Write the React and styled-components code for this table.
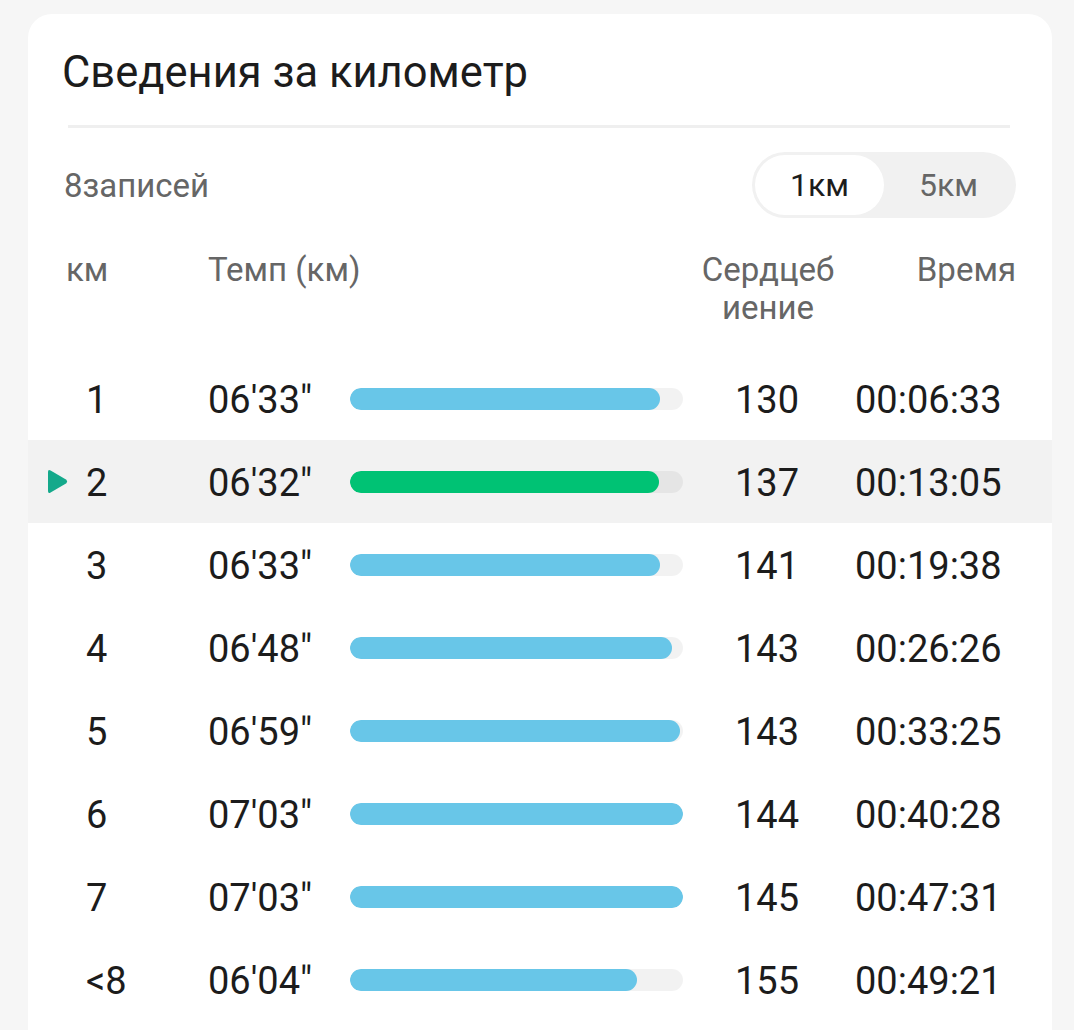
import React from "react";
import styled, { createGlobalStyle } from "styled-components";

const GlobalStyle = createGlobalStyle`
  body {
    margin: 0;
    background: #f6f6f6;
    font-family: Roboto, "Noto Sans", sans-serif;
  }
`;

const Page = styled.div`
  padding: 14px 22px 0 28px;
`;

const Card = styled.section`
  background: #ffffff;
  border-radius: 24px 24px 0 0;
  padding-bottom: 40px;
`;

const Title = styled.h1`
  margin: 0;
  padding: 34px 0 0 34px;
  font-size: 43.5px;
  line-height: 50px;
  font-weight: 400;
  color: #1c1c1c;
`;

const Divider = styled.div`
  height: 3px;
  background: #efefef;
  margin: 27px 42px 0 40px;
`;

const Summary = styled.div`
  display: flex;
  align-items: center;
  justify-content: space-between;
  margin-top: 24px;
  padding: 0 36px 0 36px;
`;

const Count = styled.span`
  font-size: 33px;
  color: #666666;
`;

const Toggle = styled.div`
  display: flex;
  background: #f1f1f1;
  border-radius: 34px;
  padding: 3px;
  width: 264px;
  height: 66px;
  box-sizing: border-box;
`;

const ToggleOption = styled.button`
  flex: 1;
  border: none;
  border-radius: 31px;
  font-family: inherit;
  font-size: 32px;
  background: ${(p) => (p.$active ? "#ffffff" : "transparent")};
  color: ${(p) => (p.$active ? "#1c1c1c" : "#666666")};
  padding: 0;
`;

const HeaderRow = styled.div`
  display: grid;
  grid-template-columns: 142px 420px 210px 1fr;
  margin: 33px 0 30px;
  padding: 0 36px 0 38px;
  font-size: 33px;
  line-height: 38px;
  color: #666666;
`;

const HeadCell = styled.div`
  text-align: ${(p) => p.$align || "left"};
`;

const HrHead = styled.div`
  width: 140px;
  text-align: center;
  margin-left: 70px;
`;

const Row = styled.div`
  display: grid;
  grid-template-columns: 58px 122px 142px 333px 172px 1fr;
  align-items: center;
  height: 83px;
  background: ${(p) => (p.$active ? "#f2f2f2" : "transparent")};
  font-size: 38px;
  color: #1c1c1c;
`;

const Marker = styled.div`
  display: flex;
  padding-left: 19px;
`;

const Value = styled.div`
  padding: 3px 0 0 ${(p) => p.$pad || 0}px;
  white-space: nowrap;
`;

const Track = styled.div`
  height: 22px;
  border-radius: 11px;
  background: rgba(0, 0, 0, 0.05);
  overflow: hidden;
`;

const Fill = styled.div`
  height: 100%;
  border-radius: 11px;
  background: ${(p) => (p.$active ? "#00c274" : "#68c6e8")};
`;

const rows = [
  { km: "1", pace: "06'33\"", fill: 310, hr: 130, time: "00:06:33" },
  { km: "2", pace: "06'32\"", fill: 309, hr: 137, time: "00:13:05", active: true },
  { km: "3", pace: "06'33\"", fill: 310, hr: 141, time: "00:19:38" },
  { km: "4", pace: "06'48\"", fill: 322, hr: 143, time: "00:26:26" },
  { km: "5", pace: "06'59\"", fill: 330, hr: 143, time: "00:33:25" },
  { km: "6", pace: "07'03\"", fill: 333, hr: 144, time: "00:40:28" },
  { km: "7", pace: "07'03\"", fill: 333, hr: 145, time: "00:47:31" },
  { km: "<8", pace: "06'04\"", fill: 287, hr: 155, time: "00:49:21" },
];

function PlayMark() {
  return (
    <svg width="21" height="25" viewBox="0 0 21 25">
      <path
        d="M1 3 Q1 0 3.6 1.5 L19.4 10.7 Q21 12.5 19.4 14.3 L3.6 23.5 Q1 25 1 22 Z"
        fill="#14a98b"
      />
    </svg>
  );
}

export default function App() {
  return (
    <Page>
      <GlobalStyle />
      <Card>
        <Title>Сведения за километр</Title>
        <Divider />
        <Summary>
          <Count>8записей</Count>
          <Toggle>
            <ToggleOption $active>1км</ToggleOption>
            <ToggleOption>5км</ToggleOption>
          </Toggle>
        </Summary>
        <HeaderRow>
          <HeadCell>км</HeadCell>
          <HeadCell>Темп (км)</HeadCell>
          <HrHead>
            Сердцеб
            <br />
            иение
          </HrHead>
          <HeadCell $align="right">Время</HeadCell>
        </HeaderRow>
        {rows.map((r) => (
          <Row key={r.km} $active={r.active}>
            <Marker>{r.active && <PlayMark />}</Marker>
            <Value>{r.km}</Value>
            <Value>{r.pace}</Value>
            <Track>
              <Fill $active={r.active} style={{ width: r.fill }} />
            </Track>
            <Value $pad={52}>{r.hr}</Value>
            <Value>{r.time}</Value>
          </Row>
        ))}
      </Card>
    </Page>
  );
}
